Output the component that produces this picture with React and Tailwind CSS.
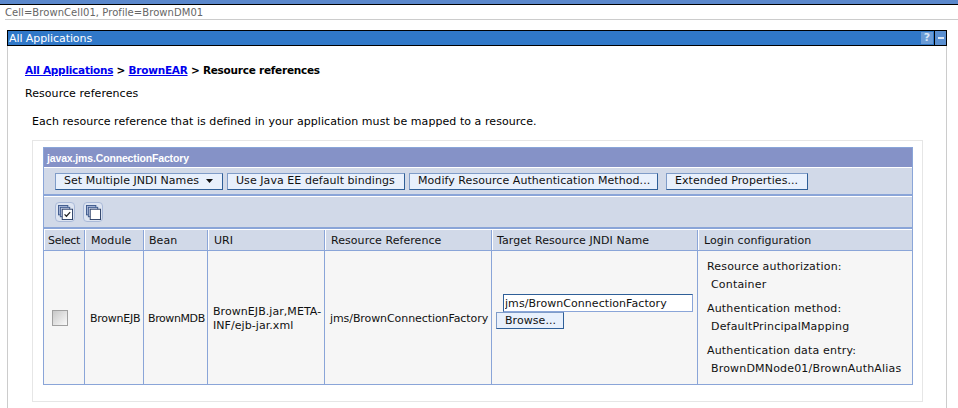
const columns = [
  { label: "Select", width: "w-[41px]", pad: "pl-[3px] tracking-[-0.3px]" },
  { label: "Module", width: "w-[59px]", pad: "pl-[5px]" },
  { label: "Bean", width: "w-[64px]", pad: "pl-[4px]" },
  { label: "URI", width: "w-[117px]", pad: "pl-[5px]" },
  { label: "Resource Reference", width: "w-[167px]", pad: "pl-[5px]" },
  { label: "Target Resource JNDI Name", width: "w-[206px]", pad: "pl-[4px]" },
  { label: "Login configuration", width: "flex-1", pad: "pl-[5px]" },
];

function ToolButton({ width, children }) {
  return (
    <button className={`${width} h-[17px] shrink-0 flex items-center pl-[8px] bg-[#e8f0fc] border border-[#7f9cc8] border-r-[#2f5f98] border-b-[#2f5f98] text-[#111] whitespace-nowrap`}>
      {children}
    </button>
  );
}

function IconButton({ checked }) {
  return (
    <button className="w-[20px] h-[20px] flex items-center justify-center bg-[#dde4f1] border border-[#a9b9d8] rounded-[4px]">
      <svg width="15" height="15" viewBox="0 0 16 16">
        <rect x="0.5" y="0.5" width="10" height="10" fill="#aebcdc" stroke="#3e5a8c" />
        <rect x="2.5" y="2.5" width="10" height="10" fill="#c8d2e8" stroke="#3e5a8c" />
        <rect x="4.5" y="4.5" width="11" height="11" fill="#fff" stroke="#2c3f66" />
        {checked && <path d="M7 10l2 2 4-4.5" fill="none" stroke="#222" strokeWidth="1.3" />}
      </svg>
    </button>
  );
}

function HeadCell({ col, last }) {
  return (
    <div className={`${col.width} ${col.pad} ${last ? "" : "border-r border-[#8aa5d8]"} h-full pt-[1px] flex items-center border-l border-l-white whitespace-nowrap`}>
      {col.label}
    </div>
  );
}

export default function App() {
  return (
    <div className="w-[958px] h-[408px] overflow-hidden bg-white text-[11px] leading-[14px] tracking-[0.06px] text-[#111] font-['DejaVu_Sans',Verdana,sans-serif]">
      <div className="h-[5px] bg-[#5b88cc] border-b border-black" />
      <div className="ml-[5px] h-[15px] pt-[1px] border-b border-[#cccccc] text-[10px] text-[#666] whitespace-nowrap">
        Cell=BrownCell01, Profile=BrownDM01
      </div>

      <div className="ml-[7px] mr-[11px] mt-[10px]">
        <div className="h-[16px] bg-[#3078c8] border border-black flex items-center justify-between text-white pl-[1px]">
          <span className="pt-[1px] tracking-[-0.08px]">All Applications</span>
          <div className="flex h-full">
            <span className="w-[12px] h-[12px] my-auto bg-[#6a9bd6] text-[#d8e6f6] font-bold flex items-center justify-center">?</span>
            <span className="ml-[1px] w-[12px] h-full border-l border-black bg-[#5a8fd0] flex items-center justify-center">
              <span className="block w-[6px] h-[2px] bg-[#dce8f6]" />
            </span>
          </div>
        </div>

        <div className="h-[370px] border-l border-r border-[#cccccc] pl-[17px] pr-[23px]">
          <div className="pt-[17px] font-bold text-[10.5px] tracking-[-0.25px] text-black whitespace-nowrap">
            <a className="text-[#0000ee] underline" href="#">All Applications</a>
            {" > "}
            <a className="text-[#0000ee] underline" href="#">BrownEAR</a>
            {" > Resource references"}
          </div>
          <div className="mt-[10px] text-black">Resource references</div>
          <div className="mt-[14px] ml-[7px] text-black whitespace-nowrap">
            Each resource reference that is defined in your application must be mapped to a resource.
          </div>

          <div className="mt-[11px] ml-[7px] w-[891px] h-[262px] border border-[#e6e6e6] pt-[6px] pl-[10px]">
            <div className="w-[870px] border border-[#8aa5d8]">
              <div className="h-[19px] bg-[#8592c7] flex items-center pl-[3px] text-white font-bold text-[10.5px] font-['Liberation_Sans',Arial,sans-serif] tracking-[-0.15px]">
                javax.jms.ConnectionFactory
              </div>
              <div className="h-[29px] border-t border-t-white border-b-[2px] border-b-[#8aa5d8] bg-[#d1d9e8] flex items-center pl-[11px]">
                <ToolButton width="w-[168px]">
                  Set Multiple JNDI Names
                  <svg className="ml-[7px]" width="7" height="4" viewBox="0 0 7 4">
                    <path d="M0 0h7L3.5 4z" fill="#111" />
                  </svg>
                </ToolButton>
                <div className="w-[4px] shrink-0" />
                <ToolButton width="w-[178px]">Use Java EE default bindings</ToolButton>
                <div className="w-[4px] shrink-0" />
                <ToolButton width="w-[249px]">Modify Resource Authentication Method...</ToolButton>
                <div className="w-[8px] shrink-0" />
                <ToolButton width="w-[142px]">Extended Properties...</ToolButton>
              </div>
              <div className="h-[33px] border-t border-t-white border-b-[2px] border-b-[#8aa5d8] bg-[#d1d9e8] flex items-center gap-[8px] pl-[11px]">
                <IconButton checked />
                <IconButton />
              </div>
              <div className="h-[22px] border-t border-t-white border-b border-b-[#8aa5d8] bg-[#d1d9e8] flex items-center">
                {columns.map((col, i) => (
                  <HeadCell key={col.label} col={col} last={i === columns.length - 1} />
                ))}
              </div>
              <div className="h-[133px] bg-[#f6f6f6] flex">
                <div className="w-[41px] border-r border-[#8aa5d8] flex items-center pl-[8px]">
                  <span className="block w-[16px] h-[16px] border border-[#a0a0a0] bg-gradient-to-br from-[#c8c8c8] to-[#fafafa]" />
                </div>
                <div className="w-[59px] border-r border-[#8aa5d8] flex items-center pt-[2px] pl-[5px] tracking-[-0.25px]">BrownEJB</div>
                <div className="w-[64px] border-r border-[#8aa5d8] flex items-center pt-[2px] pl-[4px] tracking-[-0.4px]">BrownMDB</div>
                <div className="w-[117px] border-r border-[#8aa5d8] flex items-center pt-[2px] pl-[5px]">
                  BrownEJB.jar,META-<br />INF/ejb-jar.xml
                </div>
                <div className="w-[167px] border-r border-[#8aa5d8] flex items-center pt-[2px] pl-[5px] whitespace-nowrap tracking-[-0.08px]">
                  jms/BrownConnectionFactory
                </div>
                <div className="w-[206px] border-r border-[#8aa5d8] pt-[43px] pl-[4px]">
                  <input
                    readOnly
                    value="jms/BrownConnectionFactory"
                    className="block ml-[7px] w-[190px] h-[18px] pl-[1px] bg-white border border-[#8aa5d8] border-t-[#2f5f98] border-l-[#2f5f98] outline-none"
                  />
                  <ToolButton width="w-[68px]">Browse...</ToolButton>
                </div>
                <div className="flex-1 pl-[9px] pt-[9px] tracking-[0.18px]">
                  <div>Resource authorization:</div>
                  <div className="mt-[4px] ml-[4px]">Container</div>
                  <div className="mt-[10px]">Authentication method:</div>
                  <div className="mt-[4px] ml-[4px]">DefaultPrincipalMapping</div>
                  <div className="mt-[10px]">Authentication data entry:</div>
                  <div className="mt-[4px] ml-[4px]">BrownDMNode01/BrownAuthAlias</div>
                </div>
              </div>
            </div>
          </div>
        </div>
      </div>
    </div>
  );
}
